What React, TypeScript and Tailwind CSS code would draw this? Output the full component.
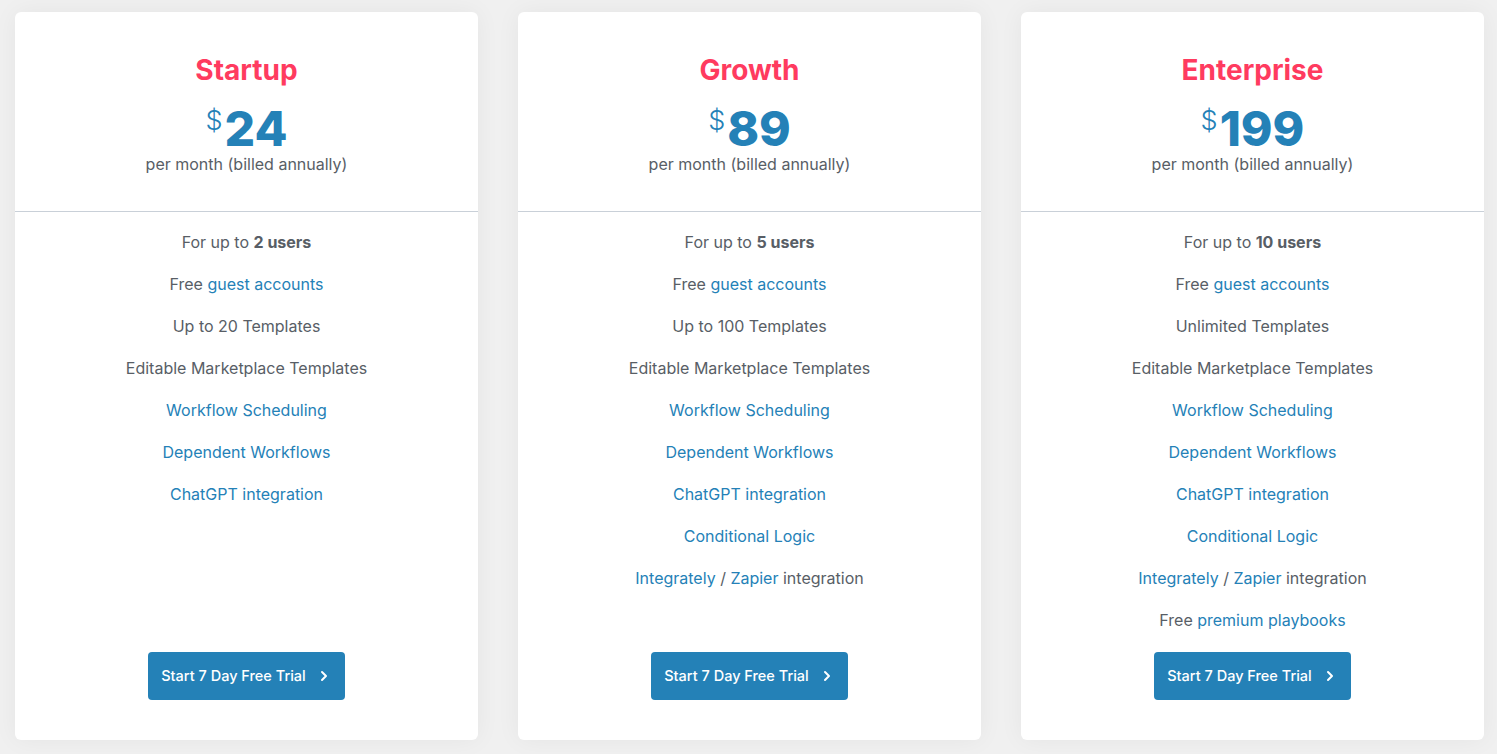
import { ChevronRight } from 'lucide-react';

type Part = { text: string; kind?: 'link' | 'bold' };
type Plan = { name: string; price: string; features: Part[][] };

const plans: Plan[] = [
  {
    name: 'Startup',
    price: '24',
    features: [
      [{ text: 'For up to ' }, { text: '2 users', kind: 'bold' }],
      [{ text: 'Free ' }, { text: 'guest accounts', kind: 'link' }],
      [{ text: 'Up to 20 Templates' }],
      [{ text: 'Editable Marketplace Templates' }],
      [{ text: 'Workflow Scheduling', kind: 'link' }],
      [{ text: 'Dependent Workflows', kind: 'link' }],
      [{ text: 'ChatGPT integration', kind: 'link' }],
    ],
  },
  {
    name: 'Growth',
    price: '89',
    features: [
      [{ text: 'For up to ' }, { text: '5 users', kind: 'bold' }],
      [{ text: 'Free ' }, { text: 'guest accounts', kind: 'link' }],
      [{ text: 'Up to 100 Templates' }],
      [{ text: 'Editable Marketplace Templates' }],
      [{ text: 'Workflow Scheduling', kind: 'link' }],
      [{ text: 'Dependent Workflows', kind: 'link' }],
      [{ text: 'ChatGPT integration', kind: 'link' }],
      [{ text: 'Conditional Logic', kind: 'link' }],
      [
        { text: 'Integrately', kind: 'link' },
        { text: ' / ' },
        { text: 'Zapier', kind: 'link' },
        { text: ' integration' },
      ],
    ],
  },
  {
    name: 'Enterprise',
    price: '199',
    features: [
      [{ text: 'For up to ' }, { text: '10 users', kind: 'bold' }],
      [{ text: 'Free ' }, { text: 'guest accounts', kind: 'link' }],
      [{ text: 'Unlimited Templates' }],
      [{ text: 'Editable Marketplace Templates' }],
      [{ text: 'Workflow Scheduling', kind: 'link' }],
      [{ text: 'Dependent Workflows', kind: 'link' }],
      [{ text: 'ChatGPT integration', kind: 'link' }],
      [{ text: 'Conditional Logic', kind: 'link' }],
      [
        { text: 'Integrately', kind: 'link' },
        { text: ' / ' },
        { text: 'Zapier', kind: 'link' },
        { text: ' integration' },
      ],
      [{ text: 'Free ' }, { text: 'premium playbooks', kind: 'link' }],
    ],
  },
];

function PlanCard({ plan }: { plan: Plan }) {
  return (
    <div className="h-[728px] bg-white rounded-md shadow-[0_0_24px_rgba(0,0,0,0.05)] flex flex-col">
      {/* Header */}
      <div className="h-[200px] border-b border-[#c9d0d8] flex flex-col items-center pt-[38px]">
        <h2 className="text-[28px] leading-[40px] font-bold text-[#ff3b5f]">{plan.name}</h2>
        <div className="flex items-start mt-[15px] text-[#2481b7]">
          <span className="text-[27px] leading-[30px] mt-[1px] mr-[2px] font-light">$</span>
          <span className="text-[48px] leading-[48px] font-extrabold">{plan.price}</span>
        </div>
        <p className="text-[16px] leading-[22px] text-[#585e66]">per month (billed annually)</p>
      </div>

      {/* Features */}
      <ul className="pt-[9px] flex flex-col items-center text-[16px] text-[#585e66]">
        {plan.features.map((parts, i) => (
          <li key={i} className="h-[42px] flex items-center">
            <span>
              {parts.map((p, j) => (
                <span
                  key={j}
                  className={
                    p.kind === 'link'
                      ? 'text-[#2481b7]'
                      : p.kind === 'bold'
                        ? 'font-bold'
                        : ''
                  }
                >
                  {p.text}
                </span>
              ))}
            </span>
          </li>
        ))}
      </ul>

      {/* Button */}
      <div className="mt-auto pb-[40px] flex justify-center">
        <button className="w-[197px] h-[48px] bg-[#2481b7] rounded-sm text-white text-[14.5px] font-medium flex items-center justify-center gap-[10px]">
          Start 7 Day Free Trial
          <ChevronRight className="w-4 h-4" strokeWidth={3} />
        </button>
      </div>
    </div>
  );
}

export default function App() {
  return (
    <div
      className="min-h-screen bg-[#f0f0f0] pl-[15px] pr-[13px] pt-[12px]"
      style={{ fontFamily: 'Inter, "Noto Sans", sans-serif' }}
    >
      <div className="grid grid-cols-3 gap-10">
        {plans.map((plan) => (
          <PlanCard key={plan.name} plan={plan} />
        ))}
      </div>
    </div>
  );
}
